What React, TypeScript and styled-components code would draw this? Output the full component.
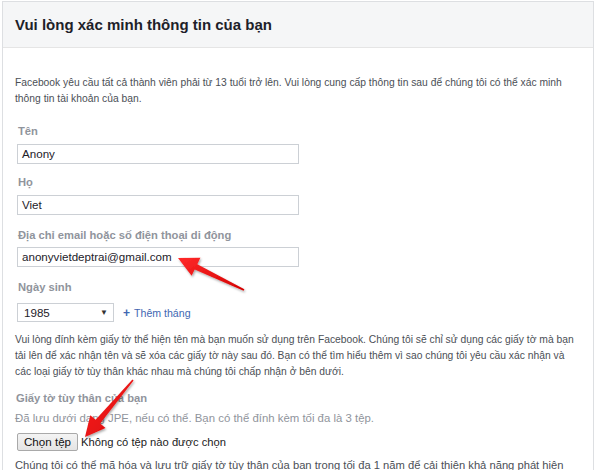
import React from "react";
import styled, { createGlobalStyle } from "styled-components";

const Global = createGlobalStyle`
  html, body { margin: 0; padding: 0; background: #fff; }
  body { font-family: "Liberation Sans", Arial, Helvetica, sans-serif; }
`;

const Page = styled.div`
  position: relative;
  width: 599px;
  height: 470px;
  overflow: hidden;
  padding: 1px 0 0 2px;
  box-sizing: border-box;
`;

const Panel = styled.div`
  width: 592px;
  border: 1px solid #dddfe2;
  border-bottom: none;
  box-sizing: border-box;
  background: #fff;
`;

const Header = styled.div`
  height: 45px;
  background: #f5f6f7;
  border-bottom: 1px solid #e5e5e5;
  display: flex;
  align-items: center;
  padding: 0 12px;
`;

const Title = styled.h2`
  margin: 0;
  font-size: 15px;
  font-weight: bold;
  color: #1d2129;
`;

const Body = styled.div`
  padding: 27px 20px 0 12px;
  display: flex;
  flex-direction: column;
`;

const Para = styled.p<{ $mb?: number; $size?: number }>`
  margin: 0 0 ${(p) => p.$mb ?? 0}px;
  font-size: ${(p) => p.$size ?? 10.3}px;
  line-height: 15.7px;
  color: #4b4f56;
  white-space: nowrap;
`;

const Field = styled.div<{ $mb: number }>`
  display: flex;
  flex-direction: column;
  align-items: flex-start;
  margin-bottom: ${(p) => p.$mb}px;
  padding-left: 2px;
`;

const Label = styled.div<{ $mb?: number }>`
  font-size: 11.2px;
  line-height: 16px;
  font-weight: bold;
  color: #90949c;
  margin-bottom: ${(p) => p.$mb ?? 5}px;
  margin-left: 1px;
`;

const TextBox = styled.div`
  width: 282px;
  height: 20px;
  box-sizing: border-box;
  border: 1px solid #ccd0d5;
  background: #fff;
  font-size: 11.6px;
  line-height: 18px;
  color: #1d2129;
  padding: 0 4px;
`;

const Row = styled.div`
  display: flex;
  align-items: center;
  gap: 9px;
`;

const Select = styled.div`
  width: 97px;
  height: 19px;
  box-sizing: border-box;
  border: 1px solid #ccd0d5;
  display: flex;
  align-items: center;
  justify-content: space-between;
  padding: 0 5px 0 6px;
  font-size: 11.6px;
  color: #1d2129;
`;

const Caret = styled.span`
  font-size: 8px;
  color: #333;
`;

const Link = styled.span`
  font-size: 10.6px;
  color: #4267b2;
  display: flex;
  align-items: center;
  gap: 4px;
`;

const Plus = styled.span`
  font-weight: bold;
  font-size: 12px;
`;

const Hint = styled.div`
  font-size: 11.4px;
  line-height: 16px;
  color: #90949c;
  margin-bottom: 7px;
`;

const FileRow = styled.div`
  display: flex;
  align-items: center;
  gap: 3px;
  margin-bottom: 7px;
  padding-left: 2px;
`;

const FileButton = styled.div`
  height: 18px;
  box-sizing: border-box;
  border: 1px solid #a9a9a9;
  border-radius: 2px;
  background: linear-gradient(#f4f4f4, #e4e4e4);
  font-size: 11.6px;
  line-height: 16px;
  padding: 0 6px;
  color: #111;
`;

const FileText = styled.span`
  font-size: 11.2px;
  color: #222;
`;

const Overlay = styled.svg`
  position: absolute;
  left: 0;
  top: 0;
  pointer-events: none;
`;

export default function App() {
  return (
    <Page>
      <Global />
      <Panel>
        <Header>
          <Title>Vui lòng xác minh thông tin của bạn</Title>
        </Header>
        <Body>
          <Para $mb={17}>
            Facebook yêu cầu tất cả thành viên phải từ 13 tuổi trở lên. Vui lòng cung cấp thông tin sau để chúng tôi có thể xác minh
            <br />
            thông tin tài khoản của bạn.
          </Para>
          <Field $mb={10}>
            <Label>Tên</Label>
            <TextBox>Anony</TextBox>
          </Field>
          <Field $mb={12}>
            <Label>Họ</Label>
            <TextBox>Viet</TextBox>
          </Field>
          <Field $mb={12}>
            <Label $mb={4}>Địa chỉ email hoặc số điện thoại di động</Label>
            <TextBox>anonyvietdeptrai@gmail.com</TextBox>
          </Field>
          <Field $mb={10}>
            <Label $mb={8}>Ngày sinh</Label>
            <Row>
              <Select>
                1985
                <Caret>▼</Caret>
              </Select>
              <Link>
                <Plus>+</Plus>Thêm tháng
              </Link>
            </Row>
          </Field>
          <Para $mb={10}>
            Vui lòng đính kèm giấy tờ thể hiện tên mà bạn muốn sử dụng trên Facebook. Chúng tôi sẽ chỉ sử dụng các giấy tờ mà bạn
            <br />
            tải lên để xác nhận tên và sẽ xóa các giấy tờ này sau đó. Bạn có thể tìm hiểu thêm vì sao chúng tôi yêu cầu xác nhận và
            <br />
            các loại giấy tờ tùy thân khác nhau mà chúng tôi chấp nhận ở bên dưới.
          </Para>
          <Label $mb={4}>Giấy tờ tùy thân của bạn</Label>
          <Hint>Đã lưu dưới dạng JPE, nếu có thể. Bạn có thể đính kèm tối đa là 3 tệp.</Hint>
          <FileRow>
            <FileButton>Chọn tệp</FileButton>
            <FileText>Không có tệp nào được chọn</FileText>
          </FileRow>
          <Para $size={11.2}>
            Chúng tôi có thể mã hóa và lưu trữ giấy tờ tùy thân của bạn trong tối đa 1 năm để cải thiện khả năng phát hiện
          </Para>
        </Body>
      </Panel>
      <Overlay width="599" height="470" viewBox="0 0 599 470">
        <defs>
          <filter id="sh" x="-20%" y="-20%" width="140%" height="140%">
            <feDropShadow dx="1" dy="1.5" stdDeviation="1" floodColor="#000" floodOpacity="0.35" />
          </filter>
          <linearGradient id="rg" x1="0" y1="0" x2="1" y2="1">
            <stop offset="0" stopColor="#ff2a2a" />
            <stop offset="1" stopColor="#d40000" />
          </linearGradient>
        </defs>
        <polygon
          filter="url(#sh)"
          fill="url(#rg)"
          points="178,258 200.4,257.8 197.3,264.2 244.4,289.3 243.6,290.7 194.7,269.5 191.6,275.8"
        />
        <polygon
          filter="url(#sh)"
          fill="url(#rg)"
          points="85,437 90.3,415.3 95.6,419.8 132.4,379.5 133.6,380.5 100.2,423.6 105.5,428.1"
        />
      </Overlay>
    </Page>
  );
}
